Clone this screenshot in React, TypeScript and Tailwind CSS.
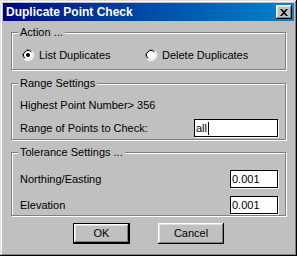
import React from 'react';

const font = "font-['Liberation_Sans',Arial,sans-serif]";

const Radio: React.FC<{ checked?: boolean }> = ({ checked }) => (
  <svg width="12" height="12" viewBox="0 0 12 12" className="shrink-0">
    <circle cx="6" cy="6" r="5.5" fill="#fff" stroke="#fff" />
    <path d="M2.11 9.89 A5.5 5.5 0 0 1 9.89 2.11" fill="none" stroke="#808080" />
    <circle cx="6" cy="6" r="4.5" fill="#fff" stroke="#dfdfdf" />
    <path d="M2.82 9.18 A4.5 4.5 0 0 1 9.18 2.82" fill="none" stroke="#000" />
    {checked && <circle cx="6" cy="6" r="2" fill="#000" />}
  </svg>
);

const Group: React.FC<{ label: string; className: string; children: React.ReactNode }> = ({ label, className, children }) => (
  <div
    className={`relative mx-[8px] border border-[#808080] shadow-[inset_1px_1px_0_#fff,1px_1px_0_#fff] ${className}`}
  >
    <span className="absolute left-[6px] top-[-8px] bg-[#c0c0c0] px-[2px] leading-[14px]">{label}</span>
    {children}
  </div>
);

const Field: React.FC<{ value: string; width: string; caret?: boolean }> = ({ value, width, caret }) => (
  <div className={`flex h-[18px] ${width} items-center border border-black bg-white pl-[1px] shadow-[1px_1px_0_#fff]`}>
    <span className="leading-[14px]">{value}</span>
    {caret && <span className="ml-[1px] h-[13px] w-[1px] bg-black" />}
  </div>
);

export default function App() {
  return (
    <div
      className={`flex h-[256px] w-[297px] flex-col bg-[#c0c0c0] p-[3px] text-[11px] text-black ${font} shadow-[inset_-1px_-1px_0_#000,inset_1px_1px_0_#dfdfdf,inset_-2px_-2px_0_#808080,inset_2px_2px_0_#fff]`}
    >
      <div className="flex h-[18px] items-center justify-between bg-gradient-to-r from-[#000080] to-[#1084d0] pl-[3px] pr-[2px]">
        <span className="text-[12px] font-bold leading-[14px] text-white">Duplicate Point Check</span>
        <div className="flex h-[14px] w-[16px] items-center justify-center bg-[#c0c0c0] shadow-[inset_-1px_-1px_0_#000,inset_1px_1px_0_#fff,inset_-2px_-2px_0_#808080,inset_2px_2px_0_#dfdfdf]">
          <svg width="8" height="7" viewBox="0 0 8 7">
            <path d="M0 0h2l2 2.2L6 0h2L5 3.5 8 7H6L4 4.8 2 7H0l3-3.5z" fill="#000" />
          </svg>
        </div>
      </div>

      <Group label="Action ..." className="mt-[11px] h-[38px] pl-[10px] pt-[14px]">
        <div className="flex h-[16px] items-center">
          <div className="flex w-[123px] items-center gap-[5px]">
            <Radio checked />
            <span>List Duplicates</span>
          </div>
          <div className="flex items-center gap-[5px]">
            <Radio />
            <span>Delete Duplicates</span>
          </div>
        </div>
      </Group>

      <Group label="Range Settings" className="mt-[13px] h-[57px] pl-[8px] pr-[7px] pt-[14px]">
        <div className="flex h-[14px] items-center">Highest Point Number&gt; 356</div>
        <div className="mt-[7px] flex items-center justify-between">
          <span>Range of Points to Check:</span>
          <Field value="all" width="w-[84px]" caret />
        </div>
      </Group>

      <Group label="Tolerance Settings ..." className="mt-[12px] h-[64px] pl-[8px] pr-[7px] pt-[17px]">
        <div className="flex items-center justify-between">
          <span>Northing/Easting</span>
          <Field value="0.001" width="w-[48px]" />
        </div>
        <div className="mt-[8px] flex items-center justify-between">
          <span>Elevation</span>
          <Field value="0.001" width="w-[48px]" />
        </div>
      </Group>

      <div className="mt-[7px] flex justify-center gap-[28px]">
        <button className="h-[21px] w-[57px] border border-black bg-[#c0c0c0] shadow-[inset_-1px_-1px_0_#000,inset_1px_1px_0_#fff,inset_-2px_-2px_0_#808080,inset_2px_2px_0_#dfdfdf]">
          OK
        </button>
        <button className="h-[21px] w-[66px] bg-[#c0c0c0] shadow-[inset_-1px_-1px_0_#000,inset_1px_1px_0_#fff,inset_-2px_-2px_0_#808080,inset_2px_2px_0_#dfdfdf]">
          Cancel
        </button>
      </div>
    </div>
  );
}
